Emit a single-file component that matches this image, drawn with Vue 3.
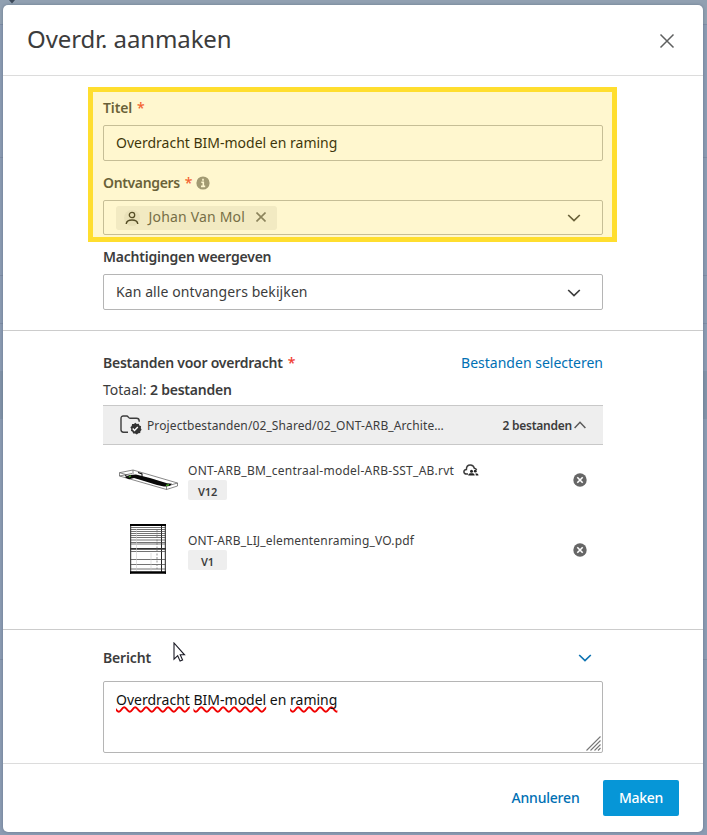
<script setup>
import { ref } from 'vue'

const title = ref('Overdracht BIM-model en raming')
const message = [
  { text: 'Overdracht', flagged: true },
  { text: 'BIM-model', flagged: true },
  { text: 'en', flagged: false },
  { text: 'raming', flagged: true },
]
const files = [
  { name: 'ONT-ARB_BM_centraal-model-ARB-SST_AB.rvt', version: 'V12', kind: 'model', shared: true },
  { name: 'ONT-ARB_LIJ_elementenraming_VO.pdf', version: 'V1', kind: 'sheet', shared: false },
]
const sheetRows = [3.5, 5.5, 7.5, 9.5, 11.5, 13.5, 16, 18.5, 20, 27.5, 35.5, 40.5, 45]
</script>

<template>
  <div class="backdrop">
    <svg class="pin" width="12" height="4" viewBox="0 0 12 4"><path d="M3 0h6L6 3.5z" fill="#3d4a5a" /></svg>
    <div class="dialog">
      <header class="head">
        <h1>Overdr. aanmaken</h1>
        <svg width="16" height="16" viewBox="0 0 16 16"><path d="M1.500 1.500l13 13M14.500 1.500l-13 13" stroke="#5f6060" stroke-width="1.500" fill="none" /></svg>
      </header>

      <section class="fields">
        <div class="highlight"></div>
        <div class="label"><span class="t-titel">Titel</span><i class="star">*</i></div>
        <div class="box title-box"><span>{{ title }}</span></div>

        <div class="label second">
          <span class="t-ontv">Ontvangers</span><i class="star">*</i>
          <svg class="info" width="14" height="14" viewBox="0 0 14 14"><circle cx="7" cy="7" r="6.600" fill="#868686" /><path d="M7 2.700v2M5.300 6.200h2v4M5 10.400h4.200" stroke="#fff" stroke-width="1.600" fill="none" /></svg>
        </div>
        <div class="box short">
          <div class="chip">
            <span class="avatar"><svg width="14" height="14" viewBox="0 0 14 14"><circle cx="7" cy="4" r="2.700" fill="none" stroke="#222" stroke-width="1.300" /><path d="M1.200 13c.3-3 2.200-4 5.800-4s5.500 1 5.800 4" fill="none" stroke="#222" stroke-width="1.400" /></svg></span>
            <span class="t-johan">Johan Van Mol</span>
            <svg class="chip-x" width="10" height="10" viewBox="0 0 10 10"><path d="M.5.5l9 9M9.500.5l-9 9" stroke="#686868" stroke-width="1.600" /></svg>
          </div>
          <svg class="chev" width="14" height="8" viewBox="0 0 14 8"><path d="M1.200 1L7 6.500 12.800 1" fill="none" stroke="#3c3c3c" stroke-width="1.700" /></svg>
        </div>

        <div class="label second"><span class="t-mach">Machtigingen weergeven</span></div>
        <div class="box">
          <span class="t-kan">Kan alle ontvangers bekijken</span>
          <svg class="chev low" width="14" height="8" viewBox="0 0 14 8"><path d="M1.200 1L7 6.500 12.800 1" fill="none" stroke="#3c3c3c" stroke-width="1.700" /></svg>
        </div>
      </section>

      <section class="files">
        <div class="row-head">
          <div class="label"><span class="t-best">Bestanden voor overdracht</span><i class="star">*</i></div>
          <a class="link">Bestanden selecteren</a>
        </div>
        <div class="total">Totaal: <b>2 bestanden</b></div>
        <div class="folder">
          <svg width="22" height="20" viewBox="0 0 22 20">
            <path d="M8 17.200H3.500C1.700 17.200 1 16.300 1 14.700V3.500C1 1.800 1.800 1 3.300 1h3.500C8.200 1 8.500 3.300 10 3.300h6.500c2 0 2.700.9 2.700 2.700v.8" fill="none" stroke="#3c3c3c" stroke-width="1.400" />
            <path d="M15.200 7.800l1.600 1.100 1.900-.2.700 1.800 1.700.8-.3 1.900.8 1.500-1.200 1.500-.2 1.800-1.900.3-1.500 1.100-1.600-1-2 .1-.7-1.800-1.600-.9.400-1.800-.9-1.700 1.300-1.400.4-1.900 1.900-.1z" fill="#333" />
            <path d="M12.700 13.600l1.800 1.800 3.300-3.300" fill="none" stroke="#fff" stroke-width="1.400" />
          </svg>
          <span class="path">Projectbestanden/02_Shared/02_ONT-ARB_Archite…</span>
          <b class="count">2 bestanden</b>
          <svg width="12" height="8" viewBox="0 0 12 8"><path d="M.6 6.900L6 1.300l5.400 5.600" fill="none" stroke="#5a5a5a" stroke-width="1.500" /></svg>
        </div>
        <div v-for="f in files" :key="f.name" class="file">
          <div class="thumb">
            <svg v-if="f.kind === 'model'" class="model" width="60" height="22" viewBox="0 0 60 22" fill="none">
              <path d="M1.500 3.700L15 1 59.500 14 48.500 17.300zM1.500 3.700V7L48.500 20.500 59.500 17V14M48.500 17.300v3.200M15 1v4M1.500 7L14 4.500" stroke="#555" stroke-width=".7" />
              <path d="M7 8.500l5-2.500 6-.5 4 1 10 2.500 17 5.300 5 .5-2 2-6 .7-7-1.500-17-5.300-6-1.700-5 1.300z" fill="#080808" />
              <path d="M10.500 8.200l2.500-1.400M48 16.500l3-.8" stroke="#49a72d" stroke-width="1.300" />
              <path d="M20 3.500l4 1.500v3M7 6.500l4 2" stroke="#111" stroke-width="1.100" />
            </svg>
            <svg v-else width="36" height="50" viewBox="0 0 36 50" fill="none">
              <path d="M.7 0v50M35.300 0v50M31.500 1v47" stroke="#222" stroke-width="1" />
              <path d="M0 1h36" stroke="#000" stroke-width="1.800" />
              <path v-for="y in sheetRows" :key="y" :d="`M0 ${y}h36`" stroke="#444" stroke-width=".75" />
              <path d="M0 24.900h36" stroke="#333" stroke-width="1.900" />
              <path d="M27 5v40" stroke="#777" stroke-width=".8" stroke-dasharray="2 1.500" />
              <path d="M21 29v18M6.500 5v42" stroke="#ccc" stroke-width=".6" />
              <path d="M0 48.600h36" stroke="#000" stroke-width="2.500" />
            </svg>
          </div>
          <div class="meta">
            <div class="name">
              <span :class="'name-' + f.kind">{{ f.name }}</span>
              <svg v-if="f.shared" width="16" height="13" viewBox="0 0 16 13">
                <path d="M5 10H3.500C1.800 10 .9 9 .9 7.700.9 6.300 2 5.400 3.400 5.400 3.400 2.600 5 1 7.300 1s3.600 1.400 4 3.200c1.200.1 2 .8 2.300 1.800" fill="none" stroke="#3c3c3c" stroke-width="1.500" />
                <circle cx="8.500" cy="7.200" r="1.500" fill="#222" /><circle cx="12.300" cy="7.200" r="1.400" fill="#222" />
                <path d="M5.200 11.500c0-1.600 1.200-2.200 3.300-2.200s3.200.6 3.200 2.200zM12.500 9.300c1.900 0 3 .7 3 2.200h-2.700z" fill="#222" />
              </svg>
            </div>
            <div class="badge">{{ f.version }}</div>
          </div>
          <svg class="remove" width="14" height="14" viewBox="0 0 14 14"><circle cx="7" cy="7" r="6.700" fill="#666" /><path d="M4.300 4.300l5.400 5.400M9.700 4.300L4.300 9.700" stroke="#fff" stroke-width="1.600" /></svg>
        </div>
      </section>

      <section class="message">
        <div class="row-head">
          <div class="label"><span class="t-ber">Bericht</span></div>
          <svg class="blue-chev" width="14" height="8" viewBox="0 0 14 8"><path d="M1.200 1L7 6.500 12.800 1" fill="none" stroke="#0d73b2" stroke-width="1.700" /></svg>
        </div>
        <div class="area">
          <span><template v-for="(w, i) in message" :key="i">{{ i ? ' ' : '' }}<span :class="{ wavy: w.flagged }">{{ w.text }}</span></template></span>
          <svg class="grip" width="15" height="15" viewBox="0 0 15 15"><path d="M.5 14.500l14-14M4.500 14.500l10-10M8.500 14.500l6-6M12 14.500l2.500-2.500" stroke="#777" stroke-width="1.100" /></svg>
        </div>
        <svg class="cursor" width="13" height="20" viewBox="0 0 13 20"><path d="M1 1v16.200l3.700-3.500 2.400 5.400 2.500-1.100-2.400-5.200h4.300z" fill="#fff" stroke="#1b1b26" stroke-width="1.100" /></svg>
      </section>

      <footer class="foot">
        <button class="cancel">Annuleren</button>
        <button class="primary">Maken</button>
      </footer>
    </div>
  </div>
</template>

<style>
body { background: #8b9bb2; overflow: hidden; }
</style>

<style scoped>
* { box-sizing: border-box; }
.backdrop {
  position: relative;
  height: 835px;
  padding: 5px 4px 3px 3px;
  background:
    linear-gradient(#7e8da5, #7e8da5) 0 24px / 100% 1px no-repeat,
    linear-gradient(#7e8da5, #7e8da5) 0 157px / 100% 1px no-repeat,
    linear-gradient(#8293a8, #8293a8) 0 371px / 100% 48px no-repeat,
    linear-gradient(#7e8da5, #7e8da5) 0 275px / 100% 1px no-repeat,
    linear-gradient(#7e8da5, #7e8da5) 0 323px / 100% 1px no-repeat,
    linear-gradient(#7e8da5, #7e8da5) 0 659px / 100% 1px no-repeat,
    linear-gradient(#91a0b1, #91a0b1) 0 0 / 100% 24px no-repeat,
    #8b9bb2;
  font: 14px/20px "Noto Sans", sans-serif;
  color: #3c3c3c;
}
.pin { position: absolute; left: 6px; top: 0; }
.dialog {
  display: flex;
  flex-direction: column;
  height: 827px;
  background: #fff;
  border-radius: 5px;
  box-shadow: 0 0 3px rgba(60, 75, 100, .45);
}
.head {
  display: flex;
  align-items: center;
  justify-content: space-between;
  height: 71px;
  padding: 2px 28px 0 24px;
  border-bottom: 1px solid #dcdcdc;
}
h1 { margin: -4px 0 0; font-size: 24px; line-height: 32px; font-weight: 400; letter-spacing: -.11px; }
section { position: relative; padding-left: 100px; padding-right: 100px; border-bottom: 1px solid #ccc; }
.fields { height: 255px; padding-top: 22px; }
.highlight {
  position: absolute;
  left: 85px;
  top: 11px;
  width: 529px;
  height: 155px;
  border: 5px solid #ffde2f;
  background: rgba(255, 221, 50, .235);
  background-clip: padding-box;
  z-index: 2;
}
.label { display: flex; align-items: center; height: 20px; font-weight: 600; white-space: nowrap; }
.second { margin-top: 12px; }
.star { color: #f03c32; font-style: normal; font-weight: 500; margin-left: 5px; }
.info { margin-left: 4px; }
.t-titel { letter-spacing: -.15px; }
.t-ontv { letter-spacing: -.36px; }
.t-mach { letter-spacing: -.23px; }
.t-kan { letter-spacing: .09px; }
.t-johan { letter-spacing: .18px; position: relative; top: -1px; }
.t-best { letter-spacing: -.24px; }
.t-ber { letter-spacing: -.15px; }
.box {
  display: flex;
  align-items: center;
  height: 36px;
  margin-top: 7px;
  padding: 0 21px 0 12px;
  border: 1px solid #b5b5b5;
  border-radius: 2px;
  white-space: nowrap;
}
.title-box { color: #000; }
.short { height: 35px; }
.chev { margin-left: auto; }
.low { margin-top: 1px; }
.chip {
  display: flex;
  align-items: center;
  width: 161px;
  height: 24px;
  padding-left: 8px;
  background: #eee;
  border-radius: 3px;
  color: #4c4c4c;
}
.avatar {
  display: flex;
  align-items: center;
  justify-content: center;
  width: 16px;
  height: 16px;
  margin-right: 8.5px;
  border-radius: 50%;
  background: #e3e3e3;
}
.chip-x { margin-left: auto; margin-right: 11px; margin-top: -1px; }
.files { height: 299px; padding-top: 22px; }
.row-head { display: flex; align-items: center; justify-content: space-between; height: 20px; white-space: nowrap; }
.link { color: #0070b4; }
.total { margin-top: 7px; white-space: nowrap; }
b { font-weight: 600; letter-spacing: -.24px; }
.folder {
  display: flex;
  align-items: center;
  height: 40px;
  margin-top: 5px;
  padding: 0 17px;
  border: solid #c8c8c8;
  border-width: 1px 0;
  background: #eee;
  font-size: 12px;
  white-space: nowrap;
}
.path { margin-left: 5px; padding-top: 2px; letter-spacing: .11px; }
.count { margin-left: auto; margin-right: 2px; padding-top: 2px; }
.file { display: flex; height: 70px; }
.thumb { display: flex; align-items: center; justify-content: center; width: 60px; margin-left: 15px; padding-bottom: 2px; }
.model { margin-top: 2px; }
.meta { margin-left: 10px; padding-top: 16px; font-size: 12px; white-space: nowrap; }
.name { display: flex; align-items: center; height: 19px; gap: 9px; }
.name-model { letter-spacing: .26px; }
.name-sheet { letter-spacing: .17px; }
.badge {
  width: 39px;
  height: 20px;
  padding-top: 2px;
  border-radius: 2px;
  background: #eee;
  font-size: 11px;
  font-weight: 600;
  text-align: center;
  letter-spacing: -.15px;
}
.remove { margin: 28px 16px 0 auto; }
.message { height: 134px; padding-top: 18px; border-color: #dcdcdc; }
.blue-chev { margin-right: 11px; }
.area {
  position: relative;
  height: 72px;
  margin-top: 13px;
  padding: 8px 12px;
  border: 1px solid #b5b5b5;
  border-radius: 2px;
  color: #111;
  white-space: nowrap;
}
.wavy { text-decoration: underline wavy #f00000 1.5px; text-underline-offset: 1px; text-decoration-skip-ink: none; }
.grip { position: absolute; right: 1px; bottom: 1px; }
.cursor { position: absolute; left: 170px; top: 12px; }
.foot { display: flex; justify-content: flex-end; align-items: center; height: 68px; padding-right: 24px; gap: 8px; }
button { height: 36px; border: 0; border-radius: 2px; background: none; font: 500 14px/20px "Noto Sans", sans-serif; white-space: nowrap; }
.cancel { width: 99px; color: #0070b4; letter-spacing: -.2px; }
.primary { width: 76px; background: #0696d7; color: #fff; letter-spacing: -.3px; }
</style>
